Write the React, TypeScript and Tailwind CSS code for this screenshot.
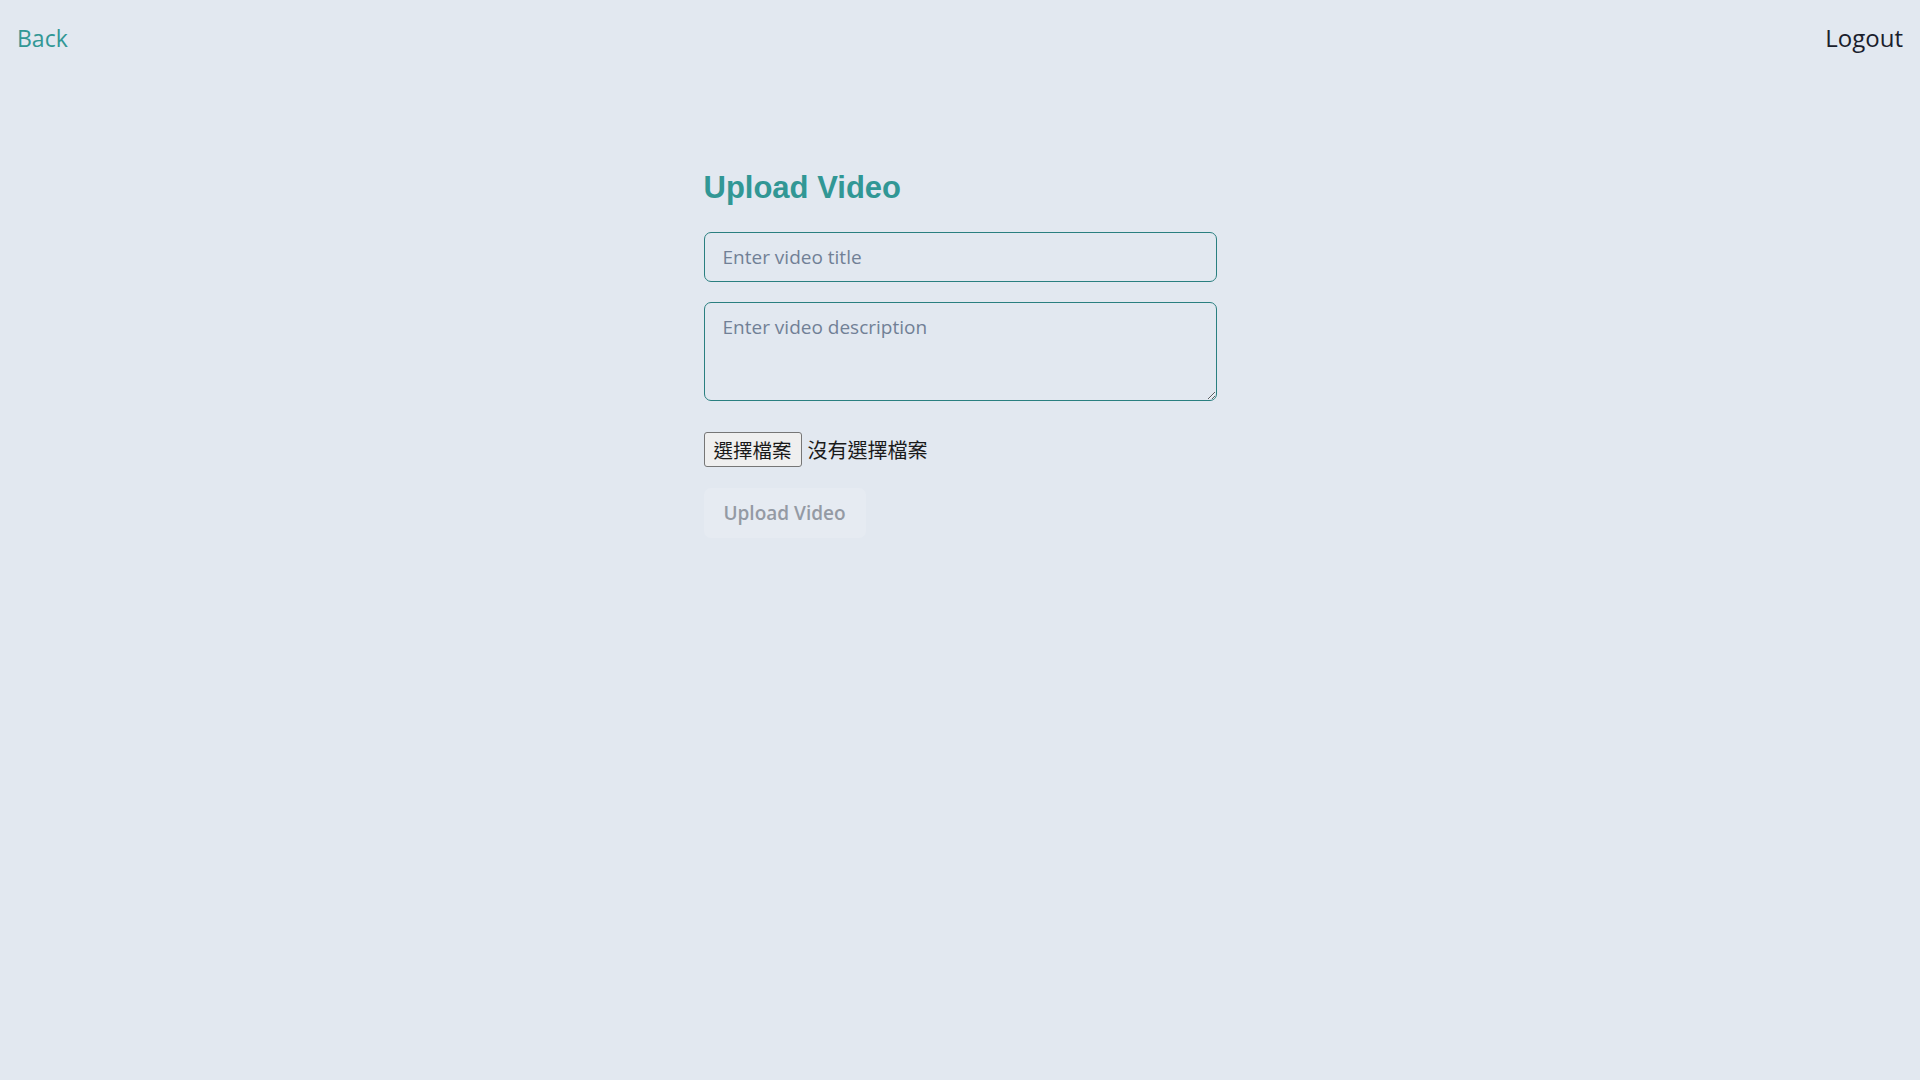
import { useState } from 'react'

const sans = 'font-["Open_Sans","Noto_Sans",sans-serif]'

function FilePicker() {
  // native file input shows English labels here, so draw the zh-TW one by hand
  return (
    <label className="flex items-center h-[35px] font-['Noto_Sans_CJK_TC','Noto_Sans_CJK_SC',sans-serif] text-[19.5px] text-[#1a1a1a] cursor-pointer">
      <span className="flex items-center justify-center h-[35px] w-[98px] bg-[#efefef] border border-[#767676] rounded-[3px]">
        選擇檔案
      </span>
      <span className="ml-[6px] text-[20px]">沒有選擇檔案</span>
      <input type="file" accept="video/*" className="hidden" />
    </label>
  )
}

export default function App() {
  const [title, setTitle] = useState('')
  const [description, setDescription] = useState('')

  return (
    <div className={`min-h-screen bg-[#e2e8f0] ${sans}`}>
      <header className="flex items-center justify-between h-[76px] px-[17px]">
        <a href="#" className="text-[23px] text-[#319795]">
          Back
        </a>
        <button className="text-[24px] text-[#1a202c]">Logout</button>
      </header>

      <main className="mx-auto w-[513px] pt-[96px]">
        <h1 className="font-['Liberation_Sans',Arial,sans-serif] font-bold text-[31px] leading-none text-[#319795] mb-[29px]">
          Upload Video
        </h1>

        <input
          type="text"
          value={title}
          onChange={(e) => setTitle(e.target.value)}
          placeholder="Enter video title"
          className={`block w-full h-[50px] px-[18px] mb-5 bg-transparent border border-[#2a7f80] rounded-[7px] text-[19px] text-[#1a202c] placeholder:text-[#718096] outline-none ${sans}`}
        />

        <textarea
          value={description}
          onChange={(e) => setDescription(e.target.value)}
          placeholder="Enter video description"
          className={`block w-full h-[99px] px-[18px] py-[9px] mb-[31px] bg-transparent border border-[#2a7f80] rounded-[7px] text-[19px] leading-[30px] text-[#1a202c] placeholder:text-[#718096] outline-none ${sans}`}
        />

        <div className="mb-[21px]">
          <FilePicker />
        </div>

        <button
          disabled
          className="flex items-center justify-center w-[162px] h-[50px] rounded-[7px] bg-[#e6ebf2] text-[19px] font-semibold text-[#949aa4] cursor-not-allowed"
        >
          Upload Video
        </button>
      </main>
    </div>
  )
}
